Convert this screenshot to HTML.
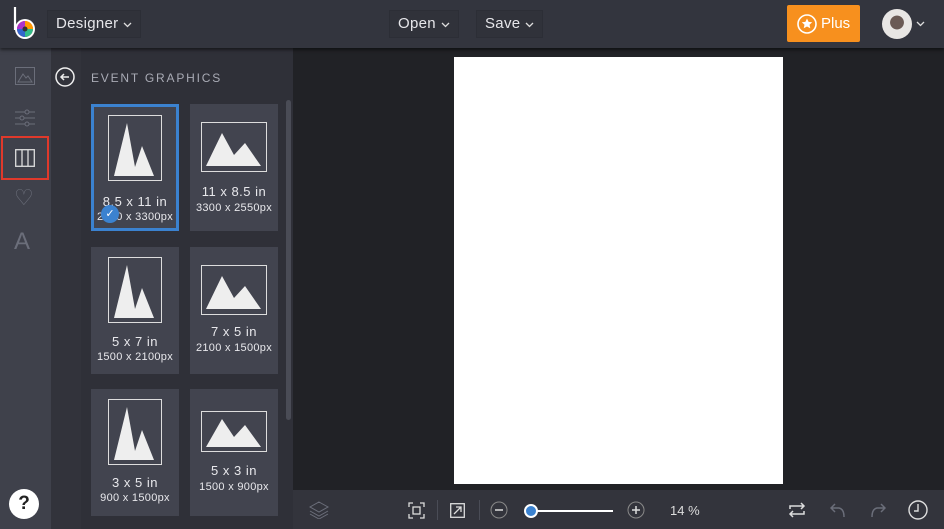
<!DOCTYPE html>
<html><head><style>
*{margin:0;padding:0;box-sizing:border-box}
body{width:944px;height:529px;overflow:hidden;background:#212226;font-family:"Liberation Sans",sans-serif;position:relative}
.abs{position:absolute}
.top{left:0;top:0;width:944px;height:48px;background:#33353e;box-shadow:0 2px 3px rgba(0,0,0,.5);z-index:2}
.btn{position:absolute;top:10px;height:28px;border:1px solid #2c2e36;background:#30323a;color:#e6e6ea;font-size:15px;line-height:26px;padding:0 22px 0 8px;letter-spacing:.3px}
.btn svg{position:absolute;right:8px;top:11px}
.rail{left:0;top:48px;width:51px;height:481px;background:#3f414b}
.col{left:51px;top:48px;width:30px;height:481px;background:#32333b}
.panel{left:81px;top:48px;width:212px;height:481px;background:#2f3038}
.card{position:absolute;width:88px;height:127px;background:#42444f;color:#e8e8ec;text-align:center}
.card .t{position:absolute;left:0;right:0;font-size:13px;letter-spacing:.5px}
.card .s{position:absolute;left:0;right:0;font-size:11px;letter-spacing:.3px}
.bot{left:293px;top:490px;width:651px;height:39px;background:#33343c}
</style></head><body>
<div class="abs top">
 <svg class="abs" style="left:12px;top:6px" width="26" height="34" viewBox="0 0 26 34"><path d="M3 1V24" stroke="#fff" stroke-width="2.2"/><circle cx="13" cy="23" r="10" fill="#fff"/><circle cx="13" cy="23" r="8" fill="#e33"/><path d="M13 23L13 15A8 8 0 0 1 21 23Z" fill="#f90"/><path d="M13 23L21 23A8 8 0 0 1 13 31Z" fill="#3b8"/><path d="M13 23L13 31A8 8 0 0 1 5 23Z" fill="#36c"/><path d="M13 23L5 23A8 8 0 0 1 13 15Z" fill="#a3c"/><circle cx="13" cy="23" r="2.5" fill="#333"/></svg>
 <div class="btn" style="left:47px">Designer<svg width="9" height="6"><path d="M1 1L4.5 4.5 8 1" fill="none" stroke="#ddd" stroke-width="1.3"/></svg></div>
 <div class="btn" style="left:389px">Open<svg width="9" height="6"><path d="M1 1L4.5 4.5 8 1" fill="none" stroke="#ddd" stroke-width="1.3"/></svg></div>
 <div class="btn" style="left:476px">Save<svg width="9" height="6"><path d="M1 1L4.5 4.5 8 1" fill="none" stroke="#ddd" stroke-width="1.3"/></svg></div>
 <div class="abs" style="left:787px;top:5px;width:73px;height:37px;background:#f7901e;border-radius:2px;color:#fff;font-size:15px;line-height:37px;padding-left:34px">Plus</div>
 <svg class="abs" style="left:797px;top:14px" width="20" height="20" viewBox="0 0 20 20"><circle cx="10" cy="10" r="9" fill="none" stroke="#fff" stroke-width="1.6"/><path d="M10 4.5l1.6 3.4 3.6.4-2.7 2.4.8 3.6L10 12.5l-3.3 1.8.8-3.6-2.7-2.4 3.6-.4z" fill="#fff"/></svg>
 <div class="abs" style="left:882px;top:9px;width:30px;height:30px;border-radius:50%;background:radial-gradient(circle at 50% 45%,#6a5a55 0 30%,#e8e6e4 32%)"></div>
 <svg class="abs" style="left:916px;top:21px" width="9" height="6"><path d="M1 1L4.5 4.5 8 1" fill="none" stroke="#ddd" stroke-width="1.3"/></svg>
</div>
<div class="abs rail"></div>
<svg class="abs" style="left:15px;top:67px" width="20" height="18"><rect x=".5" y=".5" width="19" height="17" fill="none" stroke="#6b6e7a"/><path d="M3 15L8 7 11 11 13 9 17 15Z" fill="none" stroke="#6b6e7a"/></svg>
<svg class="abs" style="left:15px;top:108px" width="20" height="20" stroke="#6b6e7a" fill="none"><path d="M0 4H20M0 10H20M0 16H20"/><circle cx="12" cy="4" r="2" fill="#3f414b"/><circle cx="7" cy="10" r="2" fill="#3f414b"/><circle cx="12" cy="16" r="2" fill="#3f414b"/></svg>
<div class="abs" style="left:1px;top:136px;width:48px;height:44px;border:2px solid #e0392b"></div>
<svg class="abs" style="left:15px;top:149px" width="20" height="18" stroke="#ddd" fill="none" stroke-width="1.3"><rect x=".7" y=".7" width="18.6" height="16.6"/><path d="M7 1V17M13 1V17"/></svg>
<div class="abs" style="left:14px;top:185px;color:#6b6e7a;font-size:22px">&#9825;</div>
<div class="abs" style="left:14px;top:228px;color:#6b6e7a;font-size:24px;font-weight:100">A</div>
<div class="abs" style="left:9px;top:489px;width:30px;height:30px;border-radius:50%;background:#fff;color:#222;font-weight:bold;font-size:19px;text-align:center;line-height:30px">?</div>
<div class="abs col"></div>
<div class="abs panel"></div>
<svg class="abs" style="left:55px;top:67px" width="20" height="20" fill="none" stroke="#eee" stroke-width="1.5"><circle cx="10" cy="10" r="9"/><path d="M14 10H6M9 7L6 10 9 13"/></svg>
<div class="abs" style="left:91px;top:71px;color:#a9abb5;font-size:12px;letter-spacing:1.8px">EVENT GRAPHICS</div>
<div class="abs" style="left:286px;top:100px;width:5px;height:320px;background:#4a4c56;border-radius:3px"></div>

<div class="card" style="left:91px;top:104px;border:3px solid #3b82d0"><svg class="abs" style="left:14px;top:8px" width="54" height="66"><rect x=".5" y=".5" width="53" height="65" fill="none" stroke="#ddd"/><path d="M6 61L19 8 27 52 34 31 46 61Z" fill="#eee"/></svg><div class="t" style="top:87px">8.5 x 11 in</div><div class="s" style="top:104px">2550 x 3300px</div><div class="abs" style="left:7px;top:98px;width:18px;height:18px;border-radius:50%;background:#3b82d0;color:#fff;font-size:11px;line-height:18px">&#10003;</div></div>
<div class="card" style="left:190px;top:104px"><svg class="abs" style="left:11px;top:18px" width="66" height="50"><rect x=".5" y=".5" width="65" height="49" fill="none" stroke="#ddd"/><path d="M5 44L21 11 33 33 44 21 60 44Z" fill="#eee"/></svg><div class="t" style="top:80px">11 x 8.5 in</div><div class="s" style="top:98px">3300 x 2550px</div></div>
<div class="card" style="left:91px;top:247px"><svg class="abs" style="left:17px;top:10px" width="54" height="66"><rect x=".5" y=".5" width="53" height="65" fill="none" stroke="#ddd"/><path d="M6 61L19 8 27 52 34 31 46 61Z" fill="#eee"/></svg><div class="t" style="top:87px">5 x 7 in</div><div class="s" style="top:104px">1500 x 2100px</div></div>
<div class="card" style="left:190px;top:247px"><svg class="abs" style="left:11px;top:18px" width="66" height="50"><rect x=".5" y=".5" width="65" height="49" fill="none" stroke="#ddd"/><path d="M5 44L21 11 33 33 44 21 60 44Z" fill="#eee"/></svg><div class="t" style="top:77px">7 x 5 in</div><div class="s" style="top:95px">2100 x 1500px</div></div>
<div class="card" style="left:91px;top:389px"><svg class="abs" style="left:17px;top:10px" width="54" height="66"><rect x=".5" y=".5" width="53" height="65" fill="none" stroke="#ddd"/><path d="M6 61L19 8 27 52 34 31 46 61Z" fill="#eee"/></svg><div class="t" style="top:86px">3 x 5 in</div><div class="s" style="top:103px">900 x 1500px</div></div>
<div class="card" style="left:190px;top:389px"><svg class="abs" style="left:11px;top:22px" width="66" height="41"><rect x=".5" y=".5" width="65" height="40" fill="none" stroke="#ddd"/><path d="M5 36L21 8 33 26 44 14 60 36Z" fill="#eee"/></svg><div class="t" style="top:74px">5 x 3 in</div><div class="s" style="top:92px">1500 x 900px</div></div>

<div class="abs" style="left:454px;top:57px;width:329px;height:427px;background:#fff"></div>
<div class="abs bot"></div>
<svg class="abs" style="left:309px;top:501px" width="20" height="18" fill="none" stroke="#6b6e7a"><path d="M10 1L19 6 10 11 1 6Z M1 10L10 15 19 10 M1 13L10 18 19 13"/></svg>
<svg class="abs" style="left:408px;top:502px" width="17" height="17" fill="none" stroke="#ddd" stroke-width="1.3"><path d="M1 5V1H5M12 1H16V5M16 12V16H12M5 16H1V12"/><rect x="5" y="5" width="7" height="7"/></svg>
<div class="abs" style="left:437px;top:500px;width:1px;height:20px;background:#4a4c56"></div>
<svg class="abs" style="left:450px;top:503px" width="15" height="15" fill="none" stroke="#ddd" stroke-width="1.3"><rect x=".7" y=".7" width="13.6" height="13.6"/><path d="M4 11L11 4M6 4H11V9"/></svg>
<div class="abs" style="left:479px;top:500px;width:1px;height:20px;background:#4a4c56"></div>
<svg class="abs" style="left:490px;top:501px" width="18" height="18" fill="none" stroke="#888"><circle cx="9" cy="9" r="8"/><path d="M5 9H13" stroke="#ddd" stroke-width="1.5"/></svg>
<div class="abs" style="left:530px;top:510px;width:83px;height:2px;background:#fff"></div>
<div class="abs" style="left:524px;top:504px;width:14px;height:14px;border-radius:50%;background:#3b82d0;border:2px solid #fff"></div>
<svg class="abs" style="left:627px;top:501px" width="18" height="18" fill="none" stroke="#888"><circle cx="9" cy="9" r="8"/><path d="M5 9H13M9 5V13" stroke="#ddd" stroke-width="1.5"/></svg>
<div class="abs" style="left:670px;top:503px;color:#ddd;font-size:13px">14 %</div>
<svg class="abs" style="left:788px;top:501px" width="18" height="18" fill="none" stroke="#ddd" stroke-width="1.5"><path d="M2 8V5H16M13 2L16 5 13 8M16 10V13H2M5 10L2 13 5 16"/></svg>
<svg class="abs" style="left:830px;top:502px" width="16" height="16" fill="none" stroke="#6b6e7a" stroke-width="1.5"><path d="M5 2L1 6 5 10M1 6H9Q14 7 14 15"/></svg>
<svg class="abs" style="left:870px;top:502px" width="16" height="16" fill="none" stroke="#6b6e7a" stroke-width="1.5"><path d="M11 2L15 6 11 10M15 6H7Q2 7 2 15"/></svg>
<svg class="abs" style="left:908px;top:500px" width="20" height="20" fill="none" stroke="#ddd" stroke-width="1.4"><circle cx="10" cy="10" r="9"/><path d="M10 4V11H6"/></svg>
</body></html>
